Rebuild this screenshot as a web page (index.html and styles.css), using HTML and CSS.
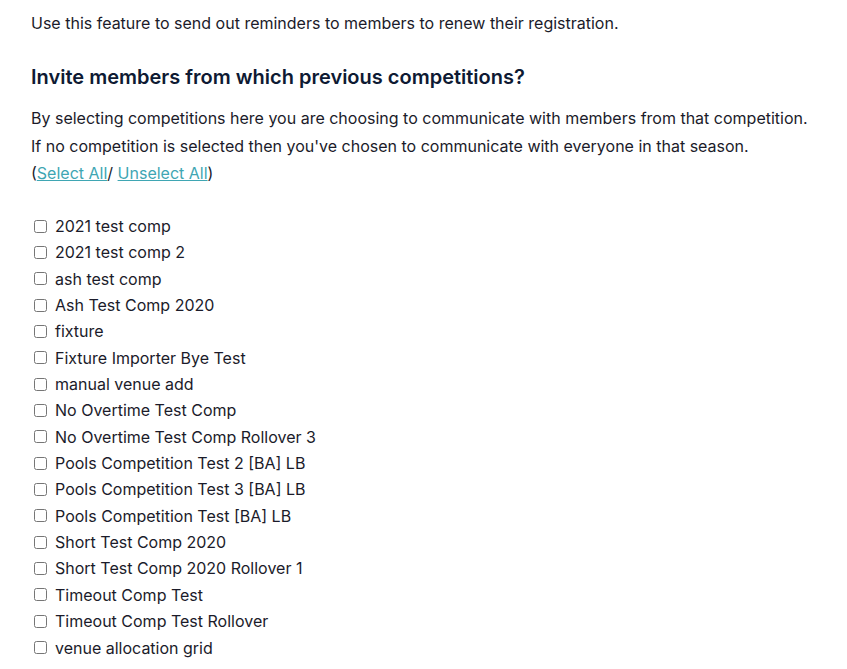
FILE: index.html
```html
<!DOCTYPE html>
<html>
<head>
<meta charset="utf-8">
<link rel="stylesheet" href="styles.css">
</head>
<body>
<div class="page">
  <p class="intro">Use this feature to send out reminders to members to renew their registration.</p>
  <h2 class="title">Invite members from which previous competitions?</h2>
  <div class="desc">
    <p>By selecting competitions here you are choosing to communicate with members from that competition.</p>
    <p>If no competition is selected then you've chosen to communicate with everyone in that season.</p>
    <p>(<a href="#">Select All</a>/ <a href="#">Unselect All</a>)</p>
  </div>
  <ul class="comps">
    <li><label><input type="checkbox"> 2021 test comp</label></li>
    <li><label><input type="checkbox"> 2021 test comp 2</label></li>
    <li><label><input type="checkbox"> ash test comp</label></li>
    <li><label><input type="checkbox"> Ash Test Comp 2020</label></li>
    <li><label><input type="checkbox"> fixture</label></li>
    <li><label><input type="checkbox"> Fixture Importer Bye Test</label></li>
    <li><label><input type="checkbox"> manual venue add</label></li>
    <li><label><input type="checkbox"> No Overtime Test Comp</label></li>
    <li><label><input type="checkbox"> No Overtime Test Comp Rollover 3</label></li>
    <li><label><input type="checkbox"> Pools Competition Test 2 [BA] LB</label></li>
    <li><label><input type="checkbox"> Pools Competition Test 3 [BA] LB</label></li>
    <li><label><input type="checkbox"> Pools Competition Test [BA] LB</label></li>
    <li><label><input type="checkbox"> Short Test Comp 2020</label></li>
    <li><label><input type="checkbox"> Short Test Comp 2020 Rollover 1</label></li>
    <li><label><input type="checkbox"> Timeout Comp Test</label></li>
    <li><label><input type="checkbox"> Timeout Comp Test Rollover</label></li>
    <li><label><input type="checkbox"> venue allocation grid</label></li>
  </ul>
</div>
</body>
</html>
```
FILE: styles.css
```css
html, body { margin: 0; padding: 0; background: #fff; }
body { font-family: Inter, Roboto, "Liberation Sans", sans-serif; color: #1b1b2a; font-size: 16px; }
.page { padding: 11px 31px 0; }
.intro { margin: 0; line-height: 24px; }
.title { margin: 28px 0 0; font-size: 20px; font-weight: 600; color: #0e1a33; line-height: 28px; }
.desc { margin-top: 13px; }
.desc p { margin: 0; line-height: 28px; }
.desc p:last-child { line-height: 26px; }
.desc a { color: #3fa6b3; text-decoration: underline; }
.comps { list-style: none; margin: 27px 0 0; padding: 0; }
.comps li { height: 26.35px; line-height: 26px; }
.comps label { display: flex; align-items: center; }
.comps input { width: 13px; height: 13px; margin: 0 8px 0 3px; }
```
